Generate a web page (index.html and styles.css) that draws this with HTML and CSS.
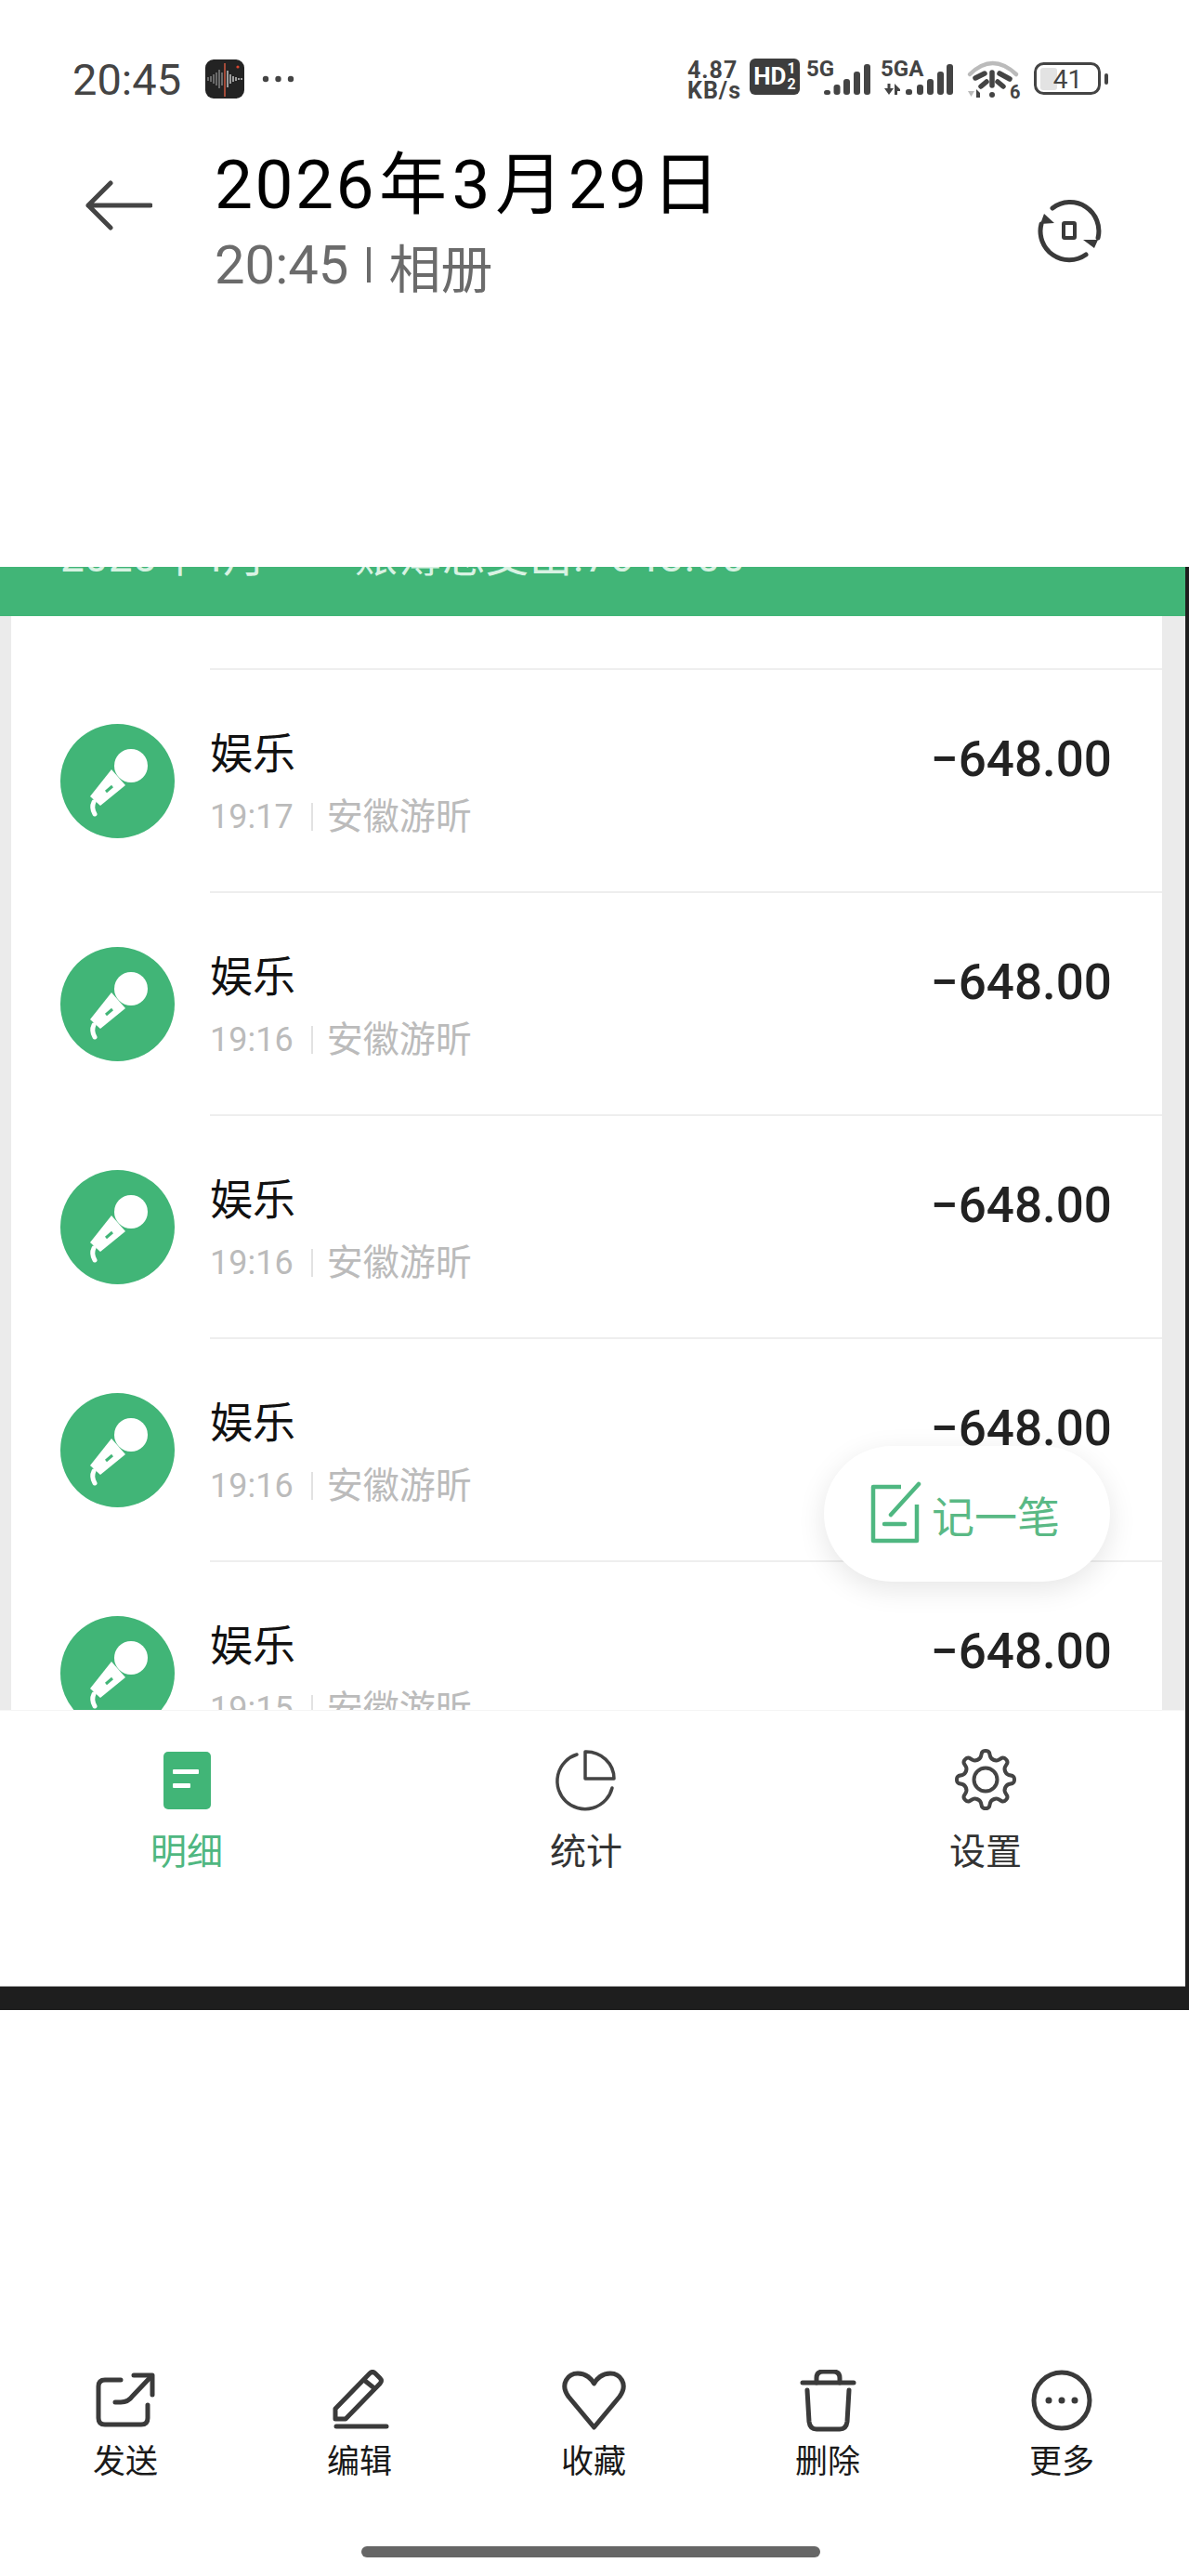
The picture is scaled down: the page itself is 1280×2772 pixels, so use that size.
FILE: index.html
```html
<!DOCTYPE html>
<html lang="zh-CN">
<head>
    <meta charset="UTF-8">
    <meta name="viewport" content="width=device-width, initial-scale=1.0">
    <title>相册</title>
    <link rel="stylesheet" href="styles.css">
</head>
<body>
    <div class="statusbar">
        <span class="sb-time">20:45</span>
        <svg class="sb-app" width="42" height="42" viewBox="0 0 42 42">
            <rect width="42" height="42" rx="9" fill="#232323"/>
            <path d="M3 19v4M6 18v6M9 16v10M12 14v14M15 11v20M18 14v14" stroke="#999" stroke-width="1.2"/>
            <path d="M24 12v18M27 16v10M30 18v6M33 19v4M36 20v2M39 20v2" stroke="#eee" stroke-width="1.2"/>
            <path d="M21 4v36" stroke="#c4553f" stroke-width="1.6"/>
            <circle cx="35" cy="8" r="1.6" fill="#d9452f"/>
        </svg>
        <svg class="sb-dots" width="36" height="8" viewBox="0 0 36 8">
            <circle cx="4" cy="4" r="3.2"/><circle cx="17.500" cy="4" r="3.2"/><circle cx="31" cy="4" r="3.2"/>
        </svg>
        <div class="sb-right">
            <div class="sb-speed"><span>4.87</span><span>KB/s</span></div>
            <div class="sb-hd">HD<span class="sb-frac"><span>1</span><span>2</span></span></div>
            <svg class="sb-icon" width="73" height="40" viewBox="-3 0 73 40">
                <text class="sb-net" x="0" y="17">5G</text>
                <rect x="19" y="32" width="7" height="5" rx="2.500"/>
                <rect x="29.500" y="26" width="7" height="11" rx="3"/>
                <rect x="40" y="20" width="7" height="17" rx="3"/>
                <rect x="51" y="12" width="7" height="25" rx="3"/>
                <rect x="62" y="4" width="7" height="33" rx="3"/>
            </svg>
            <svg class="sb-icon" width="84" height="40" viewBox="0 0 84 40">
                <text class="sb-net" x="0" y="17">5GA</text>
                <path d="M4 30h10l-5 7zM7.500 25h3v6h-3zM15 37V25l6 6v2h-3v4z"/>
                <rect x="27" y="31" width="7" height="6" rx="2.500"/>
                <rect x="39" y="26" width="7" height="11" rx="3"/>
                <rect x="50" y="20" width="7" height="17" rx="3"/>
                <rect x="61" y="12" width="7" height="25" rx="3"/>
                <rect x="71" y="4" width="7" height="33" rx="3"/>
            </svg>
            <svg class="sb-icon" width="61" height="43" viewBox="0 0 61 43">
                <path d="M2 15Q26.500-9 52 15" fill="none" stroke="#bbb" stroke-width="4.500" stroke-linecap="round"/>
                <path d="M8 19 18 14M34 14 45 20M14 28 20 23M32 23 38 28M26 13V27" fill="none" stroke="#444" stroke-width="5.500" stroke-linecap="round"/>
                <circle cx="26" cy="37" r="3"/>
                <path d="M0 33h7l-3.500 6z" fill="#bbb"/>
                <path d="M9 40v-9l4 4v5z"/>
                <text class="sb-wifi6" x="45" y="41">6</text>
            </svg>
            <svg class="sb-icon" width="81" height="39" viewBox="0 0 81 39">
                <rect x="7" y="8" width="18" height="24" rx="3" fill="#e3e3e3"/>
                <rect x="1.500" y="3.500" width="69" height="32" rx="9" fill="none" stroke="#444" stroke-width="3"/>
                <rect x="76" y="14" width="4" height="12" rx="2"/>
                <text class="sb-batt" x="36.500" y="30" text-anchor="middle">41</text>
            </svg>
        </div>
    </div>

    <div class="header">
        <svg class="back" width="72" height="54" viewBox="0 0 72 54">
            <path d="M70 27H3M27 3 3 27l24 24" fill="none" stroke="#444" stroke-width="5" stroke-linecap="round" stroke-linejoin="round"/>
        </svg>
        <div class="header-text">
            <div class="header-title">2026<span>年</span>3<span>月</span>29<span>日</span></div>
            <div class="header-sub"><span class="header-time">20:45</span><i></i><span>相册</span></div>
        </div>
        <svg class="rotate" width="70" height="70" viewBox="0 0 70 70">
            <g fill="none" stroke="#3a3a3a" stroke-width="5" stroke-linecap="round">
                <path d="M17 11A31 31 0 0 1 66 43"/>
                <path d="M53 61A31 31 0 0 1 5 28"/>
            </g>
            <rect x="29" y="27" width="12" height="16" rx="1" fill="none" stroke="#3a3a3a" stroke-width="4"/>
            <path d="M8 17 19 27 4 28zM50 45H66L62 54z" fill="#3a3a3a"/>
        </svg>
    </div>

    <div class="shot">
        <div class="month-bar">
            <span class="month">2025年4月</span>
            <span class="month-total">账簿总支出:7648.00</span>
        </div>
        <div class="list">
            <div class="row-top"><div class="row-line"></div></div>

            <div class="row">
                <svg class="cat" width="123" height="123" viewBox="0 0 123 123">
                    <circle cx="61.500" cy="61.500" r="61.500" fill="#41b577"/>
                    <circle cx="76" cy="45" r="18" fill="#fff"/>
                    <path d="M55 49 32 78 43 88 70 66z" fill="#fff"/>
                    <path d="M49 73 56 67" stroke="#41b577" stroke-width="3"/>
                    <path d="M36 84q-3 6 1 13" fill="none" stroke="#fff" stroke-width="5" stroke-linecap="round"/>
                </svg>
                <div class="row-body">
                    <div class="row-left">
                        <div class="row-title">娱乐</div>
                        <div class="row-sub"><span class="row-time">19:17</span><i></i><span>安徽游昕</span></div>
                    </div>
                    <div class="amount">−648.00</div>
                </div>
            </div>

            <div class="row">
                <svg class="cat" width="123" height="123" viewBox="0 0 123 123">
                    <circle cx="61.500" cy="61.500" r="61.500" fill="#41b577"/>
                    <circle cx="76" cy="45" r="18" fill="#fff"/>
                    <path d="M55 49 32 78 43 88 70 66z" fill="#fff"/>
                    <path d="M49 73 56 67" stroke="#41b577" stroke-width="3"/>
                    <path d="M36 84q-3 6 1 13" fill="none" stroke="#fff" stroke-width="5" stroke-linecap="round"/>
                </svg>
                <div class="row-body">
                    <div class="row-left">
                        <div class="row-title">娱乐</div>
                        <div class="row-sub"><span class="row-time">19:16</span><i></i><span>安徽游昕</span></div>
                    </div>
                    <div class="amount">−648.00</div>
                </div>
            </div>

            <div class="row">
                <svg class="cat" width="123" height="123" viewBox="0 0 123 123">
                    <circle cx="61.500" cy="61.500" r="61.500" fill="#41b577"/>
                    <circle cx="76" cy="45" r="18" fill="#fff"/>
                    <path d="M55 49 32 78 43 88 70 66z" fill="#fff"/>
                    <path d="M49 73 56 67" stroke="#41b577" stroke-width="3"/>
                    <path d="M36 84q-3 6 1 13" fill="none" stroke="#fff" stroke-width="5" stroke-linecap="round"/>
                </svg>
                <div class="row-body">
                    <div class="row-left">
                        <div class="row-title">娱乐</div>
                        <div class="row-sub"><span class="row-time">19:16</span><i></i><span>安徽游昕</span></div>
                    </div>
                    <div class="amount">−648.00</div>
                </div>
            </div>

            <div class="row">
                <svg class="cat" width="123" height="123" viewBox="0 0 123 123">
                    <circle cx="61.500" cy="61.500" r="61.500" fill="#41b577"/>
                    <circle cx="76" cy="45" r="18" fill="#fff"/>
                    <path d="M55 49 32 78 43 88 70 66z" fill="#fff"/>
                    <path d="M49 73 56 67" stroke="#41b577" stroke-width="3"/>
                    <path d="M36 84q-3 6 1 13" fill="none" stroke="#fff" stroke-width="5" stroke-linecap="round"/>
                </svg>
                <div class="row-body">
                    <div class="row-left">
                        <div class="row-title">娱乐</div>
                        <div class="row-sub"><span class="row-time">19:16</span><i></i><span>安徽游昕</span></div>
                    </div>
                    <div class="amount">−648.00</div>
                </div>
            </div>

            <div class="row">
                <svg class="cat" width="123" height="123" viewBox="0 0 123 123">
                    <circle cx="61.500" cy="61.500" r="61.500" fill="#41b577"/>
                    <circle cx="76" cy="45" r="18" fill="#fff"/>
                    <path d="M55 49 32 78 43 88 70 66z" fill="#fff"/>
                    <path d="M49 73 56 67" stroke="#41b577" stroke-width="3"/>
                    <path d="M36 84q-3 6 1 13" fill="none" stroke="#fff" stroke-width="5" stroke-linecap="round"/>
                </svg>
                <div class="row-body">
                    <div class="row-left">
                        <div class="row-title">娱乐</div>
                        <div class="row-sub"><span class="row-time">19:15</span><i></i><span>安徽游昕</span></div>
                    </div>
                    <div class="amount">−648.00</div>
                </div>
            </div>

            <div class="fab">
                <svg width="60" height="70" viewBox="0 0 60 70">
                    <path d="M36 6H6V64H53V25" fill="none" stroke="#4fb781" stroke-width="4.500" stroke-linejoin="round"/>
                    <path d="M55 3 25 36M18 46H40" fill="none" stroke="#4fb781" stroke-width="4.500" stroke-linecap="round"/>
                </svg>
                <span>记一笔</span>
            </div>
        </div>
        <div class="tabs">
            <div class="tab active">
                <svg width="72" height="70" viewBox="0 0 72 70">
                    <rect x="11" y="4" width="51" height="62" rx="5" fill="#41b577"/>
                    <rect x="21" y="23" width="28" height="5" rx="1" fill="#fff"/>
                    <rect x="21" y="38" width="19" height="5" rx="1" fill="#fff"/>
                </svg>
                <span>明细</span>
            </div>
            <div class="tab">
                <svg width="72" height="70" viewBox="0 0 72 70">
                    <g fill="none" stroke="#444" stroke-width="3.500" stroke-linecap="round" stroke-linejoin="round">
                        <path d="M35 4V33H66A30 29 0 0 0 35 4Z"/>
                        <path d="M26 7A30 30 0 1 0 64 43"/>
                    </g>
                </svg>
                <span>统计</span>
            </div>
            <div class="tab">
                <svg width="72" height="70" viewBox="0 0 72 70">
                    <g fill="none" stroke="#444" stroke-width="4" stroke-linecap="round">
                        <circle cx="36" cy="34" r="12.500"/>
                        <path d="M27.200 12.750Q30 12 31 9L32 5Q33 3 36 3Q39 3 40 5L41 9Q42 12 44.800 12.750"/>
                        <path transform="rotate(45 36 34)" d="M27.200 12.750Q30 12 31 9L32 5Q33 3 36 3Q39 3 40 5L41 9Q42 12 44.800 12.750"/>
                        <path transform="rotate(90 36 34)" d="M27.200 12.750Q30 12 31 9L32 5Q33 3 36 3Q39 3 40 5L41 9Q42 12 44.800 12.750"/>
                        <path transform="rotate(135 36 34)" d="M27.200 12.750Q30 12 31 9L32 5Q33 3 36 3Q39 3 40 5L41 9Q42 12 44.800 12.750"/>
                        <path transform="rotate(180 36 34)" d="M27.200 12.750Q30 12 31 9L32 5Q33 3 36 3Q39 3 40 5L41 9Q42 12 44.800 12.750"/>
                        <path transform="rotate(225 36 34)" d="M27.200 12.750Q30 12 31 9L32 5Q33 3 36 3Q39 3 40 5L41 9Q42 12 44.800 12.750"/>
                        <path transform="rotate(270 36 34)" d="M27.200 12.750Q30 12 31 9L32 5Q33 3 36 3Q39 3 40 5L41 9Q42 12 44.800 12.750"/>
                        <path transform="rotate(315 36 34)" d="M27.200 12.750Q30 12 31 9L32 5Q33 3 36 3Q39 3 40 5L41 9Q42 12 44.800 12.750"/>
                    </g>
                </svg>
                <span>设置</span>
            </div>
        </div>
        <div class="shot-edge"></div>
    </div>

    <div class="toolbar">
        <div class="tool">
            <svg width="72" height="68" viewBox="0 0 72 68">
                <g fill="none" stroke="#3a3a3a" stroke-width="5" stroke-linecap="round" stroke-linejoin="round">
                    <path d="M31 11H14Q7 11 7 18V52Q7 59 14 59H53Q60 59 60 52V38"/>
                    <path d="M25 35H31Q39 35 44 28L64 7"/>
                    <path d="M45 6H65V27"/>
                </g>
            </svg>
            <span>发送</span>
        </div>
        <div class="tool">
            <svg width="72" height="68" viewBox="0 0 72 68">
                <g fill="none" stroke="#3a3a3a" stroke-width="5" stroke-linecap="round" stroke-linejoin="round">
                    <path d="M10 42 47 4Q50 1 53 4L58 9Q61 12 58 15L21 53H10Z"/>
                    <path d="M42 12 52 20"/>
                    <path d="M11 61H65"/>
                </g>
            </svg>
            <span>编辑</span>
        </div>
        <div class="tool">
            <svg width="72" height="68" viewBox="0 0 72 68">
                <path d="M36.500 62 9 29C-1 15 9 4 19 4 28 4 34 10 36.500 15 39 10 45 4 54 4 64 4 74 15 64 29Z" fill="none" stroke="#3a3a3a" stroke-width="5" stroke-linejoin="round"/>
            </svg>
            <span>收藏</span>
        </div>
        <div class="tool">
            <svg width="72" height="68" viewBox="0 0 72 68">
                <g fill="none" stroke="#3a3a3a" stroke-width="5" stroke-linecap="round" stroke-linejoin="round">
                    <path d="M9 14H64"/>
                    <path d="M24 14V9Q24 2 31 2H42Q49 2 49 9V14"/>
                    <path d="M14 22 16 56Q17 64 24 64H49Q56 64 57 56L59 22"/>
                </g>
            </svg>
            <span>删除</span>
        </div>
        <div class="tool">
            <svg width="72" height="68" viewBox="0 0 72 68">
                <circle cx="36" cy="33" r="30" fill="none" stroke="#3a3a3a" stroke-width="5"/>
                <circle cx="22" cy="33" r="3.500" fill="#3a3a3a"/>
                <circle cx="36" cy="33" r="3.500" fill="#3a3a3a"/>
                <circle cx="50" cy="33" r="3.500" fill="#3a3a3a"/>
            </svg>
            <span>更多</span>
        </div>
    </div>
    <div class="home-bar"></div>
</body>
</html>
```

FILE: styles.css
```css
body {
    margin: 0;
    height: 2772px;
    overflow: hidden;
    background: #fff;
    font-family: Roboto, "Noto Sans CJK SC", sans-serif;
}
svg {
    display: block;
    flex: none;
}

/* status bar */
.statusbar {
    display: flex;
    align-items: center;
    height: 42px;
    padding: 64px 86px 0 78px;
    color: #444;
}
.sb-time {
    font-size: 47px;
    width: 118px;
}
.sb-app {
    margin-left: 25px;
}
.sb-dots {
    margin-left: 19px;
    fill: #444;
}
.sb-right {
    display: flex;
    align-items: flex-start;
    gap: 10px;
    margin-left: auto;
    padding-top: 3px;
}
.sb-speed {
    display: flex;
    flex-direction: column;
    font-size: 25px;
    font-weight: 700;
    line-height: 22px;
    letter-spacing: 1px;
    width: 57px;
}
.sb-hd {
    display: flex;
    align-items: center;
    justify-content: center;
    width: 54px;
    height: 39px;
    margin: -2px -6px 0 0;
    background: #3d3d3d;
    border-radius: 6px;
    color: #fff;
    font-size: 26px;
    font-weight: 700;
}
.sb-frac {
    display: flex;
    flex-direction: column;
    font-size: 16px;
    line-height: 17px;
    margin-left: 1px;
}
.sb-icon {
    fill: #444;
    overflow: visible;
}
.sb-net {
    font-size: 24px;
    font-weight: 700;
}
.sb-wifi6 {
    font-size: 20px;
    font-weight: 700;
}
.sb-batt {
    font-size: 28px;
}

/* title row */
.header {
    display: flex;
    align-items: flex-start;
    height: 504px;
    padding: 0 94px 0 92px;
}
.back {
    margin: 88px 67px 0 0;
}
.header-text {
    padding-top: 48px;
}
.header-title {
    font-size: 73px;
    line-height: 90px;
    letter-spacing: 2.5px;
    color: #000;
}
.header-title span {
    margin: 0 3px;
}
.header-sub {
    display: flex;
    align-items: center;
    height: 60px;
    margin-top: 11px;
    font-size: 56px;
    color: #6b6b6b;
}
.header-time {
    font-size: 58px;
}
.header-sub i {
    width: 4px;
    height: 38px;
    margin: 0 19px 0 20px;
    background: #6b6b6b;
}
.rotate {
    margin: 107px 0 0 auto;
}

/* the photographed screen */
.shot {
    position: relative;
    border-right: 4px solid #1e1e1e;
}
.month-bar {
    display: flex;
    align-items: flex-end;
    height: 53px;
    overflow: hidden;
    background: #41b577;
    color: #d8f2e3;
    font-size: 46px;
}
.month {
    margin: 0 0 35px 65px;
    width: 317px;
    flex: none;
}
.month-total {
    margin-bottom: 35px;
    letter-spacing: 1px;
    white-space: nowrap;
}
.list {
    position: relative;
    height: 1177px;
    overflow: hidden;
    box-sizing: border-box;
    border-left: 12px solid #ebebeb;
    border-right: 25px solid #ebebeb;
    background: #fff;
}
.row-top {
    height: 58px;
    box-sizing: border-box;
    padding-left: 214px;
}
.row-line {
    height: 56px;
    border-bottom: 2px solid #eee;
}
.row {
    display: flex;
    align-items: flex-start;
    height: 240px;
    padding-left: 53px;
}
.cat {
    margin: 58px 38px 0 0;
}
.row-body {
    flex: 1;
    display: flex;
    justify-content: space-between;
    box-sizing: border-box;
    height: 240px;
    padding-right: 54px;
    border-bottom: 2px solid #eee;
}
.row-title {
    font-size: 46px;
    line-height: 60px;
    margin-top: 60px;
    color: #111;
}
.row-sub {
    display: flex;
    align-items: center;
    font-size: 39px;
    line-height: 50px;
    margin-top: 13px;
    color: #bbb;
}
.row-time {
    font-size: 36px;
}
.row-sub i {
    width: 2px;
    height: 30px;
    margin: 0 15px 0 19px;
    background: #e2e2e2;
}
.amount {
    font-size: 53px;
    font-weight: 500;
    line-height: 60px;
    margin-top: 66px;
    color: #222;
}
.fab {
    position: absolute;
    top: 893px;
    right: 56px;
    display: flex;
    align-items: center;
    gap: 9px;
    box-sizing: border-box;
    width: 308px;
    height: 146px;
    padding-left: 47px;
    background: #fff;
    border-radius: 73px;
    box-shadow: 0 8px 30px rgba(0,0,0,0.1);
    color: #5ab985;
    font-size: 46px;
}
.tabs {
    display: flex;
    justify-content: space-between;
    box-sizing: border-box;
    height: 298px;
    padding: 40px 179px 0 165px;
    background: #fff;
    border-top: 1px solid #f5f5f5;
    border-bottom: 1px solid #999;
}
.tab {
    display: flex;
    flex-direction: column;
    align-items: center;
    width: 72px;
    color: #333;
    font-size: 39px;
    line-height: 44px;
    gap: 20px;
}
.tab span {
    white-space: nowrap;
}
.tab.active {
    color: #4fb781;
}
.shot-edge {
    height: 25px;
    margin-right: -4px;
    background: #1e1e1e;
}

/* bottom actions */
.toolbar {
    display: grid;
    grid-template-columns: repeat(5, 252px);
    padding-left: 9px;
    margin-top: 387px;
}
.tool {
    display: flex;
    flex-direction: column;
    align-items: center;
    gap: 10px;
    font-size: 35px;
    line-height: 44px;
    color: #1a1a1a;
}
.home-bar {
    width: 494px;
    height: 12px;
    margin: 68px 0 0 389px;
    background: #666;
    border-radius: 6px;
}
```
